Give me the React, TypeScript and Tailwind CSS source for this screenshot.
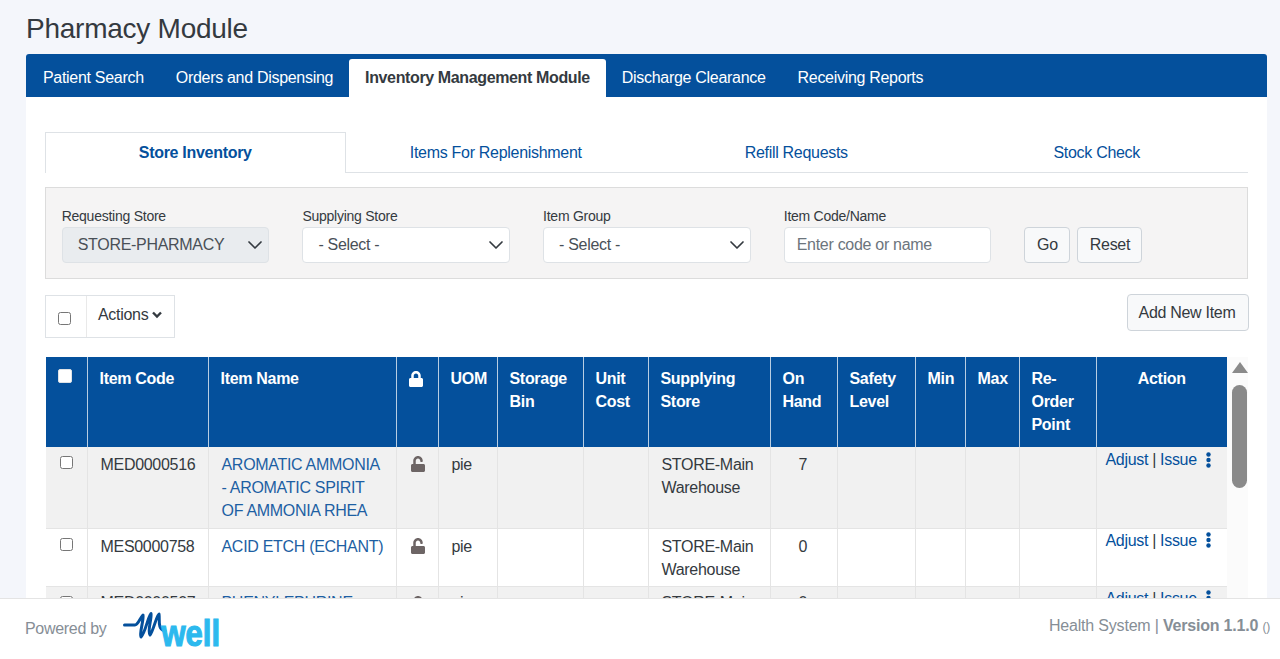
import { FaLock, FaUnlock } from "react-icons/fa";

const mainTabs = ["Patient Search", "Orders and Dispensing", "Inventory Management Module", "Discharge Clearance", "Receiving Reports"];
const subTabs = ["Store Inventory", "Items For Replenishment", "Refill Requests", "Stock Check"];
const columnWidths = [41, 121, 188, 42, 59, 86, 65, 122, 67, 78, 50, 54, 77, 131];

const rows = [
  { code: "MED0000516", name: "AROMATIC AMMONIA - AROMATIC SPIRIT OF AMMONIA RHEA", store: "STORE-Main Warehouse", onHand: "7", height: "h-[81px]", bg: "bg-[#f1f1f1]", textPt: "pt-[6px]", actionPt: "pt-[1px]" },
  { code: "MES0000758", name: "ACID ETCH (ECHANT)", store: "STORE-Main Warehouse", onHand: "0", height: "h-[58px]", bg: "bg-white", textPt: "pt-[6px]", actionPt: "pt-[0px]" },
  { code: "MED0000507", name: "PHENYLEPHRINE", store: "STORE-Main Warehouse", onHand: "0", height: "h-[58px]", bg: "bg-[#f1f1f1]", textPt: "pt-[4px]", actionPt: "pt-[0px]" },
];

const Chevron = () => (
  <svg width="16" height="16" viewBox="0 0 16 16" fill="none" stroke="#343a40" strokeWidth="1.7" strokeLinecap="round" strokeLinejoin="round">
    <path d="M2 5l6 6 6-6" />
  </svg>
);

const Kebab = () => (
  <svg width="5" height="16" viewBox="0 0 5 16" fill="#04509c">
    <circle cx="2.5" cy="2.5" r="2.2" />
    <circle cx="2.5" cy="8" r="2.2" />
    <circle cx="2.5" cy="13.5" r="2.2" />
  </svg>
);

const SelectField = ({ label, value, disabled }: { label: string; value: string; disabled?: boolean }) => (
  <div className="w-[207.5px]">
    <div className="text-[14px] tracking-[-0.25px] leading-[16px] text-[#343a40] mb-[3px]">{label}</div>
    <div className={`h-[36px] flex items-center justify-between pl-[15px] pr-[5px] border border-[#dee2e6] rounded text-[#495057] ${disabled ? "bg-[#e9ecef]" : "bg-white"}`}>
      <span>{value}</span>
      <Chevron />
    </div>
  </div>
);

const Logo = () => (
  <div className="h-[34px] relative w-[96px]">
    <svg width="50" height="30" viewBox="0 0 50 30" fill="none" className="absolute left-0 top-0" stroke="#04509c" strokeWidth="3" strokeLinecap="round" strokeLinejoin="round">
      <path d="M1.5 13H12C15 13 17 6 20 3C21 8 16 22 18 25C22 22 26 1.5 28 1.5C29 6 24 20 27 23C30 20 34 2 36 2C37 8 34 17 42 19" />
    </svg>
    <span className="absolute left-[39px] top-[0px] origin-top scale-y-[1.22] font-bold text-[31px] leading-[36px] tracking-[0px] text-[#2cb9ee] [-webkit-text-stroke:1px_#2cb9ee]">well</span>
  </div>
);

export default function App() {
  return (
    <div className="h-[659px] w-[1280px] overflow-hidden relative bg-[#f4f6fb] font-['Liberation_Sans',Arial,sans-serif] text-[16px] tracking-[-0.3px] text-[#343a40]">
      <div className="pl-[26px] pr-[13px] pt-[11px]">
        <h1 className="text-[28px] tracking-[-0.25px] leading-[36px] text-[#343a40] mb-[7px]">Pharmacy Module</h1>
        <div className="bg-white rounded-t-[3px] h-[620px]">
          <div className="h-[43px] bg-[#04509c] rounded-t-[3px] flex items-end pl-[1px]">
            {mainTabs.map((tab) =>
              tab === "Inventory Management Module" ? (
                <div key={tab} className="h-[38px] px-[16px] flex items-center bg-white rounded-t-[3px] font-bold tracking-[-0.37px] text-[#343a40]">{tab}</div>
              ) : (
                <div key={tab} className="h-[38px] px-[16px] flex items-center text-white">{tab}</div>
              )
            )}
          </div>

          <div className="pl-[19px] pr-[19px] pt-[35px]">
            <div className="flex h-[41px] border-b border-[#dee2e6]">
              {subTabs.map((tab, i) => (
                <div
                  key={tab}
                  className={`w-[300.5px] h-[41px] flex items-center justify-center text-[#04509c] border border-b-0 ${i === 0 ? "font-bold bg-white border-[#dee2e6]" : "border-transparent"}`}
                >
                  {tab}
                </div>
              ))}
            </div>

            <div className="mt-[14px] h-[92px] bg-[#f5f4f4] border border-[#dcdcdc] flex items-start gap-[33.2px] pl-[15.7px] pt-[20px]">
              <SelectField label="Requesting Store" value="STORE-PHARMACY" disabled />
              <SelectField label="Supplying Store" value="- Select -" />
              <SelectField label="Item Group" value="- Select -" />
              <div className="w-[207.5px]">
                <div className="text-[14px] tracking-[-0.25px] leading-[16px] text-[#343a40] mb-[3px]">Item Code/Name</div>
                <div className="h-[36px] flex items-center px-[12px] border border-[#dee2e6] rounded bg-white text-[#6c757d]">Enter code or name</div>
              </div>
              <div className="flex gap-[7px] pt-[19px]">
                <button className="h-[36px] w-[46px] border border-[#ced4da] rounded bg-[#f8f9fa]">Go</button>
                <button className="h-[36px] w-[65px] border border-[#ced4da] rounded bg-[#f8f9fa]">Reset</button>
              </div>
            </div>

            <div className="mt-[16px] h-[43px] flex items-start justify-between">
              <div className="flex h-[43px] w-[130px] border border-[#dee2e6]">
                <div className="w-[41px] flex items-center justify-center border-r border-[#e9e9e9] pt-[3px] pr-[3px]">
                  <input type="checkbox" className="w-[13px] h-[13px]" />
                </div>
                <div className="flex items-center pl-[11px] gap-[4px] pb-[3px]">
                  Actions
                  <svg width="10" height="8" viewBox="0 0 10 8" fill="none" stroke="#343a40" strokeWidth="2.4"><path d="M1 1.5l4 4 4-4" /></svg>
                </div>
              </div>
              <button className="-mt-[1px] -mr-[1px] pr-[2px] h-[37px] w-[122px] border border-[#ced4da] rounded bg-[#f8f9fa]">Add New Item</button>
            </div>

            <div className="mt-[19px] flex">
              <div className="w-[1182px] pl-[1px]">
                <table className="table-fixed w-[1181px] border-collapse leading-[23px]">
                  <colgroup>
                    {columnWidths.map((w, i) => (
                      <col key={i} style={{ width: w }} />
                    ))}
                  </colgroup>
                  <thead>
                    <tr className="h-[90px] bg-[#04509c] text-white font-bold text-left align-top">
                      <th className="border-r border-[#b8cde2] pt-[12px] pl-[12px]">
                        <div className="w-[14px] h-[14px] bg-white rounded-[2px] border border-[#dee2e6]" />
                      </th>
                      <th className="border-r border-[#b8cde2] pt-[10px] pl-[12px]">Item Code</th>
                      <th className="border-r border-[#b8cde2] pt-[10px] pl-[12px]">Item Name</th>
                      <th className="border-r border-[#b8cde2] pt-[14px] pl-[11px]"><FaLock size={16} color="white" /></th>
                      <th className="border-r border-[#b8cde2] pt-[10px] pl-[12px]">UOM</th>
                      <th className="border-r border-[#b8cde2] pt-[10px] pl-[12px]">Storage Bin</th>
                      <th className="border-r border-[#b8cde2] pt-[10px] pl-[12px]">Unit Cost</th>
                      <th className="border-r border-[#b8cde2] pt-[10px] pl-[12px]">Supplying Store</th>
                      <th className="border-r border-[#b8cde2] pt-[10px] pl-[12px]">On Hand</th>
                      <th className="border-r border-[#b8cde2] pt-[10px] pl-[12px]">Safety Level</th>
                      <th className="border-r border-[#b8cde2] pt-[10px] pl-[12px]">Min</th>
                      <th className="border-r border-[#b8cde2] pt-[10px] pl-[12px]">Max</th>
                      <th className="border-r border-[#b8cde2] pt-[10px] pl-[12px]">Re-Order Point</th>
                      <th className="pt-[10px] text-center">Action</th>
                    </tr>
                  </thead>
                  <tbody>
                    {rows.map((row) => (
                      <tr key={row.code} className={`${row.height} ${row.bg} align-top border-b border-[#e4e4e4]`}>
                        <td className="border-r border-[#e4e4e4] pl-[14px] pt-[9px]"><input type="checkbox" className="w-[13px] h-[13px] block" /></td>
                        <td className={`border-r border-[#e4e4e4] pl-[13px] ${row.textPt}`}>{row.code}</td>
                        <td className={`border-r border-[#e4e4e4] pl-[13px] pr-[12px] ${row.textPt} text-[#1d5fa3]`}>{row.name}</td>
                        <td className="border-r border-[#e4e4e4] pl-[13px] pt-[9px]"><FaUnlock size={16} color="#6d6565" /></td>
                        <td className={`border-r border-[#e4e4e4] pl-[13px] ${row.textPt}`}>pie</td>
                        <td className="border-r border-[#e4e4e4]" />
                        <td className="border-r border-[#e4e4e4]" />
                        <td className={`border-r border-[#e4e4e4] pl-[13px] pr-[8px] ${row.textPt}`}>{row.store}</td>
                        <td className={`border-r border-[#e4e4e4] pl-[28px] ${row.textPt}`}>{row.onHand}</td>
                        <td className="border-r border-[#e4e4e4]" />
                        <td className="border-r border-[#e4e4e4]" />
                        <td className="border-r border-[#e4e4e4]" />
                        <td className="border-r border-[#e4e4e4]" />
                        <td className={`pl-[9px] align-top ${row.actionPt}`}>
                          <div className="flex items-center">
                            <span className="text-[#04509c]">Adjust</span>
                            <span className="mx-[4px]">|</span>
                            <span className="text-[#04509c]">Issue</span>
                            <span className="ml-[9px]"><Kebab /></span>
                          </div>
                        </td>
                      </tr>
                    ))}
                  </tbody>
                </table>
              </div>
              <div className="w-[21px] bg-[#fbfbfb] relative">
                <div className="ml-[5px] mt-[5px] w-0 h-0 border-l-[8px] border-r-[8px] border-b-[11px] border-l-transparent border-r-transparent border-b-[#8a8a8a]" />
                <div className="ml-[5px] mt-[12px] w-[15px] h-[103px] rounded-full bg-[#8a8a8a]" />
              </div>
            </div>
          </div>
        </div>
      </div>

      <footer className="absolute left-0 right-0 bottom-0 h-[61px] bg-white border-t border-[#e4e4e4] flex items-center justify-between pl-[25px] pr-[10px]">
        <div className="flex items-center gap-[16px] text-[#868e96]">
          <span>Powered by</span>
          <Logo />
        </div>
        <div className="text-[#868e96] pb-[6px] tracking-[-0.2px]">
          Health System | <span className="font-bold">Version 1.1.0</span> <span className="text-[12px]">()</span>
        </div>
      </footer>
    </div>
  );
}
